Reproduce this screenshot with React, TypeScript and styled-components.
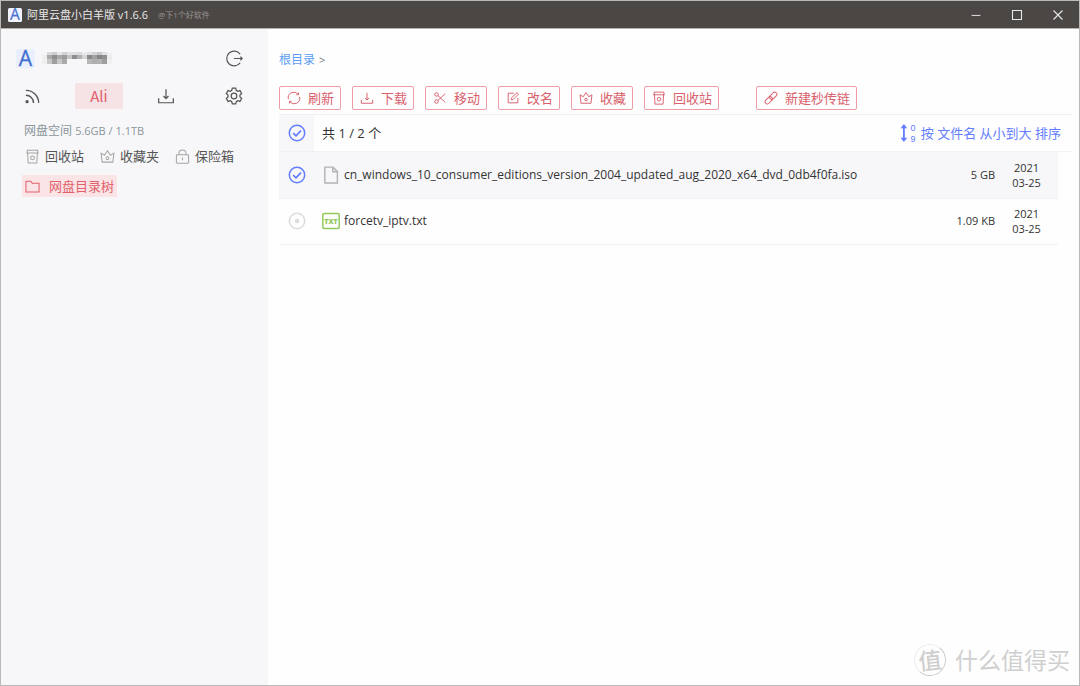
import React from 'react';
import styled, { createGlobalStyle } from 'styled-components';

const GlobalStyle = createGlobalStyle`
  *, *::before, *::after { box-sizing: border-box; }
  body {
    margin: 0;
    font-family: "Open Sans", "Noto Sans CJK SC", sans-serif;
    font-size: 12px;
    line-height: 16px;
    color: #333;
    background: #fefefe;
  }
  button, input { font: inherit; }
`;

const red = '#d9606c';
const blue = '#637dff';

const AppWindow = styled.div`
  position: relative;
  display: flex;
  flex-direction: column;
  min-height: 100vh;
  border: 1px solid #b9b9b9;
`;

const TitleBar = styled.header`
  display: flex;
  align-items: center;
  height: 28px;
  padding: 0 1px 0 7px;
  border-bottom: 1px solid #b5b3b2;
  background: #4b4745;
  color: #e8e8e8;
`;

const AppName = styled.h1`
  margin: 0 10px 0 5px;
  font-size: 11px;
  font-weight: 400;
`;

const AppNote = styled.span`
  flex: 1;
  font-size: 8px;
  color: #9a9593;
`;

const WindowButton = styled.button`
  display: grid;
  place-items: center;
  width: 41px;
  height: 27px;
  padding: 0;
  border: 0;
  background: none;
  color: #e8e8e8;
`;

const Body = styled.div`
  flex: 1;
  display: flex;
`;

const Sidebar = styled.aside`
  flex: none;
  width: 267px;
  padding: 19px 25px 0 15px;
  background: #f7f7f9;
`;

const SideRow = styled.div`
  display: flex;
  align-items: center;
`;

const UserRow = styled(SideRow)`
  justify-content: space-between;
  height: 20px;
`;

const User = styled.div`
  display: flex;
  align-items: center;
  gap: 7px;
`;

const IconButton = styled.button`
  display: grid;
  place-items: center;
  width: 18px;
  height: 18px;
  padding: 0;
  border: 0;
  background: none;
  color: #555;
`;

const TabRow = styled(SideRow)`
  gap: 34px;
  margin-top: 15px;
  padding-left: 7px;
  > :last-child { margin-left: auto; }
`;

const ActiveTab = styled.button`
  width: 48px;
  height: 26px;
  padding: 0;
  border: 0;
  border-radius: 2px;
  background: #f6e3e6;
  color: #e0616c;
  font-family: "Noto Sans CJK SC", sans-serif;
  font-size: 15px;
  line-height: 26px;
`;

const Space = styled.p`
  margin: 14px 0 0 8px;
  font-size: 12px;
  color: #8b959a;
  span { font-size: 11px; }
`;

const QuickLinks = styled.nav`
  display: flex;
  gap: 16px;
  margin: 8px 0 0 9px;
`;

const QuickLink = styled.a`
  display: flex;
  align-items: center;
  gap: 5px;
  font-size: 13px;
  line-height: 18px;
  color: #555;
  text-decoration: none;
  white-space: nowrap;
  svg { color: #a5a5a5; }
`;

const TreeLink = styled.a`
  display: inline-flex;
  align-items: center;
  gap: 9px;
  margin: 10px 0 0 6px;
  padding: 0 3px;
  background: #fbe4e6;
  color: #e0616c;
  font-size: 13px;
  line-height: 22px;
  text-decoration: none;
`;

const Main = styled.main`
  flex: 1;
  min-width: 0;
  padding: 23px 7px 0 11px;
`;

const Breadcrumb = styled.nav`
  display: flex;
  align-items: center;
  gap: 4px;
  color: #777;
  font-size: 11px;
  a { font-size: 12px; color: #5c9df5; text-decoration: none; }
`;

const Toolbar = styled.div`
  display: flex;
  gap: 11px;
  padding: 18px 0 4px;
  border-bottom: 1px solid #f0f0f2;
`;

const ToolButton = styled.button<{ $apart?: boolean }>`
  display: flex;
  align-items: center;
  gap: 7px;
  height: 24px;
  margin-left: ${(p) => (p.$apart ? 26 : 0)}px;
  padding: 0 6px 0 7px;
  border: 1px solid #ee9ca5;
  border-radius: 2px;
  background: #fefefe;
  color: ${red};
  font-size: 13px;
  line-height: 20px;
  white-space: nowrap;
`;

const ListHeader = styled.div`
  display: flex;
  align-items: center;
  height: 37px;
  padding-right: 11px;
  border-bottom: 1px solid #f2f2f4;
`;

const SelectAll = styled.div`
  align-self: stretch;
  display: grid;
  place-items: center;
  width: 35px;
  margin-right: 8px;
  background: #f7f7f9;
`;

const Count = styled.span`
  flex: 1;
  font-size: 13px;
`;

const SortButton = styled.button`
  display: flex;
  align-items: center;
  gap: 4px;
  padding: 0;
  border: 0;
  background: none;
  color: ${blue};
  font-size: 13px;
`;

const CheckLabel = styled.label<{ $on?: boolean }>`
  display: grid;
  width: 18px;
  height: 18px;
  color: ${(p) => (p.$on ? blue : '#dcdcdf')};
  > * { grid-area: 1 / 1; margin: 0; }
  input { opacity: 0; width: 18px; height: 18px; }
`;

const FileTable = styled.table`
  width: calc(100% - 14px);
  border-collapse: collapse;
`;

const FileRow = styled.tr<{ $on?: boolean }>`
  height: 46px;
  background: ${(p) => (p.$on ? '#f7f7f9' : 'transparent')};
  border-bottom: 1px solid #f0f0f2;
`;

const Cell = styled.td<{ $w?: number }>`
  width: ${(p) => (p.$w ? `${p.$w}px` : 'auto')};
  padding: 0;
`;

const CheckCell = styled(Cell)`
  padding-left: 9px;
`;

const SizeCell = styled(Cell)`
  text-align: right;
  font-size: 11px;
`;

const DateCell = styled(Cell)`
  text-align: center;
  font-size: 11px;
  line-height: 15px;
`;

const FileName = styled.div`
  display: flex;
  align-items: center;
  gap: 4px;
  svg { color: #b4b4b6; }
`;

const Watermark = styled.div`
  position: absolute;
  right: 9px;
  bottom: 9px;
  display: flex;
  align-items: center;
  gap: 9px;
  color: #cfcfcf;
  font-size: 23px;
  line-height: 32px;
`;

const Seal = styled.span`
  display: grid;
  place-items: center;
  width: 32px;
  height: 32px;
  border: 1px solid #ececec;
  border-right-color: #cacaca;
  border-bottom-color: #cacaca;
  border-radius: 50%;
  font-size: 23px;
  font-weight: 500;
  line-height: 28px;
  transform: rotate(-6deg);
`;

type IconName =
  | 'refresh' | 'download' | 'cut' | 'edit' | 'crown' | 'bin' | 'link'
  | 'rss' | 'gear' | 'logout' | 'lock' | 'folder' | 'file' | 'minimize' | 'maximize' | 'close';

const shapes: Record<IconName, React.ReactNode> = {
  refresh: <path d="M1.6 9.4A6.4 6.4 0 0 1 12.8 3.8M14.4 6.6A6.4 6.4 0 0 1 3.2 12.2M13.2 1.8V4.3H10.8M2.8 14.2v-2.5h2.4" />,
  download: <path d="M1.5 10v4h13v-4M8 2v8M5.8 8 8 10.4 10.2 8" />,
  cut: (
    <>
      <circle cx="4" cy="4" r="2" />
      <circle cx="4" cy="12" r="2" />
      <path d="M5.6 5.2 14 13M5.6 10.8 14 3" />
    </>
  ),
  edit: <path d="M9 2.5H2.5v11h11V8M6 10l.3-2.2L12.6 1.8l1.8 1.7L8.2 9.7Z" />,
  crown: (
    <>
      <path d="M1.2 4.4 4.8 6.6 8 1.8l3.2 4.8 3.6-2.2-1.1 9.6H2.3Z" />
      <circle cx="8" cy="9.8" r="1.5" />
    </>
  ),
  bin: (
    <>
      <path d="M2.4 4.3V1.3h11.2v3M1.4 4.3h13.2M2.8 4.3 3.4 15h9.2l.6-10.7" />
      <circle cx="8" cy="9.4" r="2" />
    </>
  ),
  link: (
    <>
      <rect x="-4.8" y="-2.5" width="9.6" height="5" rx="2.5" transform="translate(10.6 5.4) rotate(-45)" />
      <rect x="-4.8" y="-2.5" width="9.6" height="5" rx="2.5" transform="translate(5.4 10.6) rotate(-45)" />
    </>
  ),
  rss: (
    <>
      <path d="M1.8 6.8a7.2 7.2 0 0 1 7.2 7.2M1.8 2.2A11.8 11.8 0 0 1 13.8 14" />
      <circle cx="2.9" cy="12.9" r=".9" fill="currentColor" />
    </>
  ),
  gear: (
    <>
      <path d="M6.5 1h3l.5 2 1.3.8 2-.6 1.5 2.6-1.5 1.4v1.6l1.5 1.4-1.5 2.6-2-.6-1.3.8-.5 2h-3L6 13l-1.3-.8-2 .6-1.5-2.6 1.5-1.4V7.2L1.2 5.8l1.5-2.6 2 .6L6 3Z" />
      <circle cx="8" cy="8" r="2.5" />
    </>
  ),
  logout: <path d="M13.3 3.8a7 7 0 1 0 0 8.4M7.5 8h7.8M13.5 6.2 15.3 8l-1.8 1.8" />,
  lock: (
    <>
      <rect x="1.5" y="6.2" width="13" height="9" rx="1" />
      <path d="M4.2 6.2V4.8a3.8 3.8 0 0 1 7.6 0v1.4M8 9v3" />
    </>
  ),
  folder: <path d="M1 2.5h5l1.8 2H15v9.3H1Z" />,
  file: <path d="M2.5 1h7.3l3.9 4v10.2H2.5ZM9.6 1v4.2h4" />,
  minimize: <path d="M3 8.5h10" />,
  maximize: <path d="M3.5 3.5h9v9h-9Z" />,
  close: <path d="M3.5 3.5l9 9M12.5 3.5l-9 9" />,
};

function Icon({ name, size = 14, weight = 1.1 }: { name: IconName; size?: number; weight?: number }) {
  return (
    <svg width={size} height={size} viewBox="0 0 16 16" fill="none" stroke="currentColor" strokeWidth={weight} aria-hidden="true">
      {shapes[name]}
    </svg>
  );
}

function Logo({ size, back, line }: { size: number; back: string; line: string }) {
  return (
    <svg width={size} height={size} viewBox="0 0 18 18" overflow="visible" aria-hidden="true">
      <rect width="18" height="18" rx="2" fill={back} />
      <text x="9" y="16" textAnchor="middle" fontFamily="Open Sans" fontSize="20" fill={line} stroke={line} strokeWidth=".3">A</text>
    </svg>
  );
}

const mosaic = [
  '#eeeeef', '#aaa', '#8f8f90', '#a9a9aa', '#9c9c9d', '#c4c4c5', '#8d8d8e',
  '#b1b1b2', '#d5d5d6', '#8a8a8b', '#a1a1a2', '#858586', '#909091', '#ececed',
];

function MaskedName() {
  return (
    <svg width="72" height="16" viewBox="0 0 72 16" role="img" aria-label="user">
      {mosaic.map((c, i) => (
        <g key={i}>
          <rect x={i * 5} y="2" width="5" height="3" fill={c} opacity={i % 3 ? 0.4 : 0.2} />
          <rect x={i * 5} y="5" width="5" height="4" fill={c} />
          {(i < 5 || i > 8) && <rect x={i * 5} y="9" width="5" height="5" fill={c} opacity={i % 2 ? 0.6 : 0.85} />}
        </g>
      ))}
    </svg>
  );
}

function Check({ on, label }: { on?: boolean; label: string }) {
  return (
    <CheckLabel $on={on}>
      <input type="checkbox" defaultChecked={on} aria-label={label} />
      <svg width="18" height="18" viewBox="0 0 18 18" fill="none" stroke="currentColor" strokeWidth="1.5" aria-hidden="true">
        <circle cx="9" cy="9" r="7.7" />
        {on ? <path d="M5.2 9.2 8 11.8l5-5.2" strokeWidth="1.8" /> : <circle cx="9" cy="9" r="1.5" fill="currentColor" />}
      </svg>
    </CheckLabel>
  );
}

function TxtIcon() {
  return (
    <svg width="18" height="18" viewBox="0 0 18 18" aria-hidden="true">
      <rect x=".8" y="1.6" width="16.4" height="14.8" rx="1.5" fill="none" stroke="#93c95c" strokeWidth="1.5" />
      <text x="9" y="11.8" textAnchor="middle" fontFamily="Open Sans" fontWeight="800" fontSize="7" fill="#93c95c">TXT</text>
    </svg>
  );
}

function SortIcon() {
  return (
    <svg width="18" height="20" viewBox="0 0 18 20" overflow="visible" fill="currentColor" aria-hidden="true">
      <path d="M4 4h1.8v12H4Z" />
      <path d="M1.6 5.2 4.9 1l3.3 4.2Z" />
      <path d="M1.6 14.8 4.9 19l3.3-4.2Z" />
      <text x="14" y="8" textAnchor="middle" fontFamily="Liberation Sans" fontSize="9">0</text>
      <text x="14" y="19" textAnchor="middle" fontFamily="Liberation Sans" fontSize="9">9</text>
    </svg>
  );
}

const tools: { icon: IconName; text: string; apart?: boolean }[] = [
  { icon: 'refresh', text: '刷新' },
  { icon: 'download', text: '下载' },
  { icon: 'cut', text: '移动' },
  { icon: 'edit', text: '改名' },
  { icon: 'crown', text: '收藏' },
  { icon: 'bin', text: '回收站' },
  { icon: 'link', text: '新建秒传链', apart: true },
];

const files = [
  { name: 'cn_windows_10_consumer_editions_version_2004_updated_aug_2020_x64_dvd_0db4f0fa.iso', size: '5 GB', on: true },
  { name: 'forcetv_iptv.txt', size: '1.09 KB', on: false },
];

export default function App() {
  return (
    <>
      <GlobalStyle />
      <AppWindow>
        <TitleBar>
          <Logo size={14} back="#f1f4ff" line="#4a72cf" />
          <AppName>阿里云盘小白羊版 v1.6.6</AppName>
          <AppNote>@下1个好软件</AppNote>
          <WindowButton aria-label="最小化"><Icon name="minimize" /></WindowButton>
          <WindowButton aria-label="最大化"><Icon name="maximize" size={16} /></WindowButton>
          <WindowButton aria-label="关闭"><Icon name="close" size={16} /></WindowButton>
        </TitleBar>
        <Body>
          <Sidebar>
            <UserRow>
              <User>
                <Logo size={19} back="#e9effc" line="#3f6fd0" />
                <MaskedName />
              </User>
              <IconButton aria-label="退出"><Icon name="logout" size={17} /></IconButton>
            </UserRow>
            <TabRow>
              <IconButton aria-label="订阅"><Icon name="rss" size={17} weight={1.3} /></IconButton>
              <ActiveTab>Ali</ActiveTab>
              <IconButton aria-label="下载"><Icon name="download" size={18} /></IconButton>
              <IconButton aria-label="设置"><Icon name="gear" size={18} /></IconButton>
            </TabRow>
            <Space>网盘空间 <span>5.6GB / 1.1TB</span></Space>
            <QuickLinks>
              <QuickLink href="#bin"><Icon name="bin" size={15} />回收站</QuickLink>
              <QuickLink href="#fav"><Icon name="crown" size={15} />收藏夹</QuickLink>
              <QuickLink href="#safe"><Icon name="lock" size={15} />保险箱</QuickLink>
            </QuickLinks>
            <TreeLink href="#tree"><Icon name="folder" size={15} />网盘目录树</TreeLink>
          </Sidebar>
          <Main>
            <Breadcrumb><a href="#root">根目录</a>&gt;</Breadcrumb>
            <Toolbar>
              {tools.map((t) => (
                <ToolButton key={t.text} $apart={t.apart}><Icon name={t.icon} />{t.text}</ToolButton>
              ))}
            </Toolbar>
            <ListHeader>
              <SelectAll><Check on label="全选" /></SelectAll>
              <Count>共 1 / 2 个</Count>
              <SortButton><SortIcon />按 文件名 从小到大 排序</SortButton>
            </ListHeader>
            <FileTable>
              <tbody>
                {files.map((f) => (
                  <FileRow key={f.name} $on={f.on}>
                    <CheckCell $w={43}><Check on={f.on} label={f.name} /></CheckCell>
                    <Cell>
                      <FileName>
                        {f.on ? <Icon name="file" size={18} weight={1.3} /> : <TxtIcon />}
                        {f.name}
                      </FileName>
                    </Cell>
                    <SizeCell $w={60}>{f.size}</SizeCell>
                    <DateCell $w={63}>2021<br />03-25</DateCell>
                  </FileRow>
                ))}
              </tbody>
            </FileTable>
          </Main>
        </Body>
        <Watermark><Seal>值</Seal>什么值得买</Watermark>
      </AppWindow>
    </>
  );
}
